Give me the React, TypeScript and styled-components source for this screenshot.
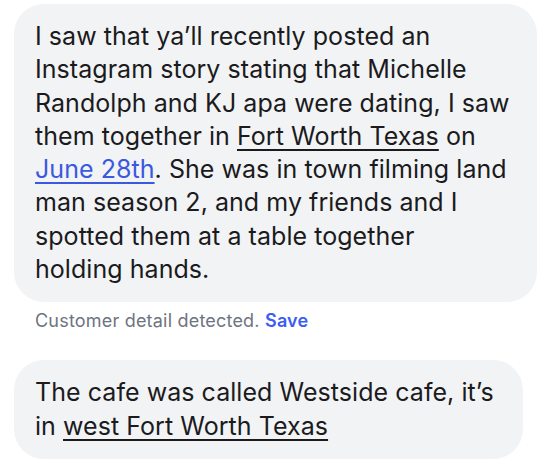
import React from "react";
import styled, { createGlobalStyle } from "styled-components";

const Global = createGlobalStyle`
  html, body { margin: 0; padding: 0; background: #ffffff; }
  body { font-family: Inter, "Liberation Sans", sans-serif; -webkit-font-smoothing: antialiased; }
`;

const Thread = styled.div`
  display: flex;
  flex-direction: column;
  align-items: flex-start;
  padding: 4px 15px 0 14px;
`;

const Bubble = styled.div<{ $full?: boolean }>`
  box-sizing: border-box;
  width: ${(p) => (p.$full ? "523px" : "auto")};
  background: #f2f3f5;
  border-radius: 30px;
  padding: 16px ${(p) => (p.$full ? "16px" : "29px")} 16px 21px;
  font-size: 25px;
  line-height: 33.3px;
  color: #1b1b1d;
  letter-spacing: 0.05px;
  white-space: nowrap;
`;

const Underlined = styled.span`
  text-decoration: underline;
  text-decoration-thickness: 1.5px;
  text-underline-offset: 4px;
`;

const DateLink = styled(Underlined)`
  color: #3a58e0;
`;

const Caption = styled.div`
  margin: 9px 0 29px 21px;
  font-size: 18px;
  line-height: 20px;
  letter-spacing: 0.2px;
  color: #6e7480;
`;

const SaveLink = styled.span`
  color: #3d5cf2;
  font-weight: 600;
`;

export default function App() {
  return (
    <>
      <Global />
      <Thread>
        <Bubble $full>
          I saw that ya’ll recently posted an
          <br />
          Instagram story stating that Michelle
          <br />
          Randolph and KJ apa were dating, I saw
          <br />
          them together in <Underlined>Fort Worth Texas</Underlined> on
          <br />
          <DateLink>June 28th</DateLink>. She was in town filming land
          <br />
          man season 2, and my friends and I
          <br />
          spotted them at a table together
          <br />
          holding hands.
        </Bubble>
        <Caption>
          Customer detail detected. <SaveLink>Save</SaveLink>
        </Caption>
        <Bubble>
          The cafe was called Westside cafe, it’s
          <br />
          in <Underlined>west Fort Worth Texas</Underlined>
        </Bubble>
      </Thread>
    </>
  );
}
